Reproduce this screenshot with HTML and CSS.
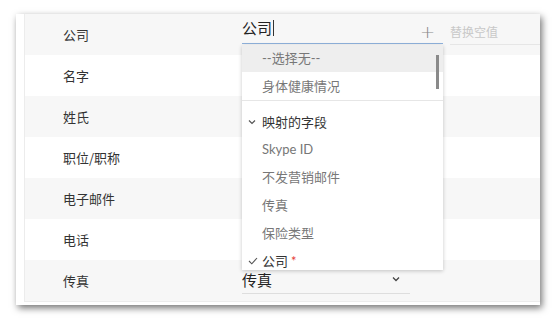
FILE: index.html
```html
<!DOCTYPE html>
<html lang="zh">
<head>
<meta charset="utf-8">
<link rel="stylesheet" href="styles.css">
</head>
<body>
<div class="card">
  <div class="rows">
    <div class="row shade">
      <div class="label">公司</div>
      <div class="value first">
        <div class="combo active">
          <span class="combo-text">公司<span class="caret"></span></span>
          <span class="plus">+</span>
        </div>
        <div class="replace">替换空值</div>
        <div class="dropdown">
          <div class="item hl">--选择无--</div>
          <div class="item">身体健康情况</div>
          <div class="sep"></div>
          <div class="group"><svg class="chev" viewBox="0 0 8 6" width="8" height="6"><path d="M1 1.5 L4 4.5 L7 1.5" fill="none" stroke="#555" stroke-width="1.2"/></svg>映射的字段</div>
          <div class="item">Skype ID</div>
          <div class="item">不发营销邮件</div>
          <div class="item">传真</div>
          <div class="item">保险类型</div>
          <div class="item sel"><svg class="check" viewBox="0 0 10 8" width="10" height="8"><path d="M1 4 L3.8 6.8 L9 1" fill="none" stroke="#555" stroke-width="1.1"/></svg>公司<span class="req">*</span></div>
          <div class="scroll"></div>
        </div>
      </div>
    </div>
    <div class="row">
      <div class="label">名字</div>
      <div class="value"></div>
    </div>
    <div class="row shade">
      <div class="label">姓氏</div>
      <div class="value"></div>
    </div>
    <div class="row">
      <div class="label">职位/职称</div>
      <div class="value"></div>
    </div>
    <div class="row shade">
      <div class="label">电子邮件</div>
      <div class="value"></div>
    </div>
    <div class="row">
      <div class="label">电话</div>
      <div class="value"></div>
    </div>
    <div class="row shade">
      <div class="label">传真</div>
      <div class="value">
        <div class="combo plain">
          <span class="combo-text">传真</span>
          <svg class="chev2" viewBox="0 0 8 6" width="8" height="6"><path d="M1 1.5 L4 4.5 L7 1.5" fill="none" stroke="#444" stroke-width="1.3"/></svg>
        </div>
      </div>
    </div>
  </div>
</div>
</body>
</html>
```

FILE: styles.css
```css
html, body {
  margin: 0;
  padding: 0;
  background: #ffffff;
}
body {
  width: 556px;
  height: 320px;
  overflow: hidden;
  font-family: Lato, "Noto Sans CJK SC", sans-serif;
}
.card {
  margin: 14px 0 0 16px;
  width: 524px;
  height: 291px;
  background: #ffffff;
  box-shadow: 2px 3px 7px rgba(0, 0, 0, 0.55);
  box-sizing: border-box;
  padding-left: 8px;
}
.rows {
  border-left: 1px solid #ececec;
  border-bottom: 1px solid #ececec;
  height: 288px;
  box-sizing: border-box;
}
.row {
  display: grid;
  grid-template-columns: 217px 1fr;
  height: 41px;
  align-items: center;
}
.row.shade {
  background: #f7f7f7;
}
.label {
  padding-left: 38px;
  font-size: 13px;
  color: #333;
  font-family: "Noto Sans CJK SC", sans-serif;
}
.value {
  position: relative;
  height: 100%;
  display: flex;
  align-items: flex-start;
}
.combo {
  box-sizing: border-box;
  display: flex;
  align-items: center;
  justify-content: space-between;
  font-family: "Noto Sans CJK SC", sans-serif;
}
.combo.active {
  width: 201px;
  height: 30px;
  border-bottom: 1px solid #8fb2dc;
  padding-right: 10px;
}
.combo-text {
  font-size: 15px;
  color: #222;
  display: flex;
  align-items: center;
  line-height: 20px;
}
.combo.active .combo-text {
  margin-top: -2px;
}
.caret {
  display: inline-block;
  width: 1px;
  height: 16px;
  background: #333;
  margin-left: 1px;
}
.plus {
  font-size: 18px;
  line-height: 18px;
  color: #8a8a8a;
  font-family: "DejaVu Sans", sans-serif;
  font-weight: 200;
  margin-top: 7px;
  margin-right: -2px;
}
.replace {
  margin-left: 7px;
  flex: 1;
  height: 31px;
  box-sizing: border-box;
  border-bottom: 1px solid #e6e6e6;
  font-size: 12px;
  color: #c8c8c8;
  line-height: 36px;
  font-family: "Noto Sans CJK SC", sans-serif;
}
.combo.plain {
  width: 168px;
  height: 34px;
  border-bottom: 1px solid #dedede;
  padding-right: 10px;
  padding-top: 6px;
}
.chev2 {
  margin-top: -2px;
}
.dropdown {
  position: absolute;
  top: 31px;
  left: 0;
  width: 201px;
  height: 225px;
  background: #ffffff;
  box-shadow: 0 1px 4px rgba(0, 0, 0, 0.22);
  overflow: hidden;
  z-index: 5;
  font-family: Lato, "Noto Sans CJK SC", sans-serif;
}
.item {
  height: 28px;
  line-height: 28px;
  padding-left: 20px;
  font-size: 13px;
  color: #777;
  white-space: nowrap;
}
.item.hl {
  background: #eeeeee;
  height: 27px;
  line-height: 27px;
}
.sep {
  height: 1px;
  background: #e6e6e6;
  margin-bottom: 8px;
}
.group {
  height: 26px;
  line-height: 26px;
  padding-left: 6px;
  font-size: 13px;
  color: #333;
  display: flex;
  align-items: center;
}
.chev {
  margin-right: 6px;
}
.item.sel {
  color: #333;
  padding-left: 6px;
  display: flex;
  align-items: center;
  height: 27px;
}
.check {
  margin-right: 4px;
}
.req {
  color: #e53935;
  margin-left: 3px;
  font-size: 13px;
  line-height: 13px;
  margin-top: 2px;
}
.scroll {
  position: absolute;
  right: 4px;
  top: 10px;
  width: 3px;
  height: 34px;
  background: #8a8a8a;
}
```
